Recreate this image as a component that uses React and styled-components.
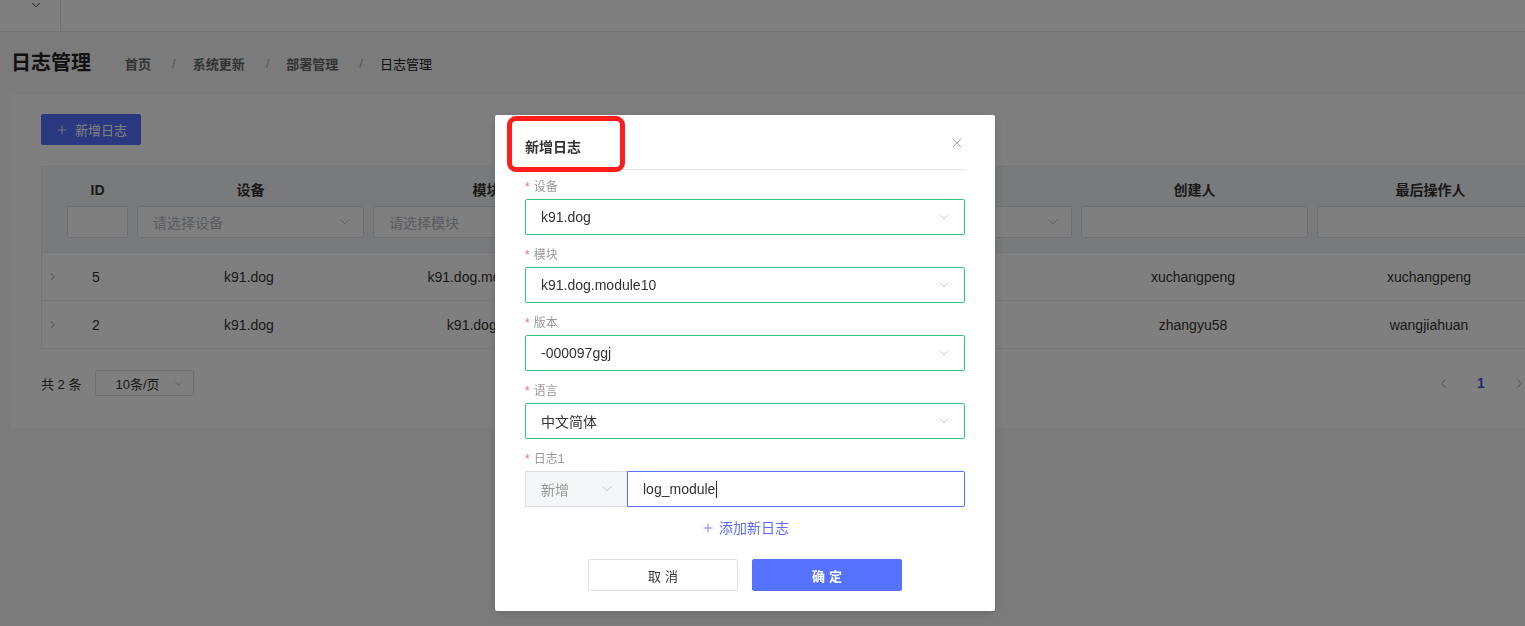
import React from "react";
import styled, { createGlobalStyle } from "styled-components";
import { ChevronDown, ChevronLeft, ChevronRight, Plus, X } from "lucide-react";

const GlobalStyle = createGlobalStyle`
  html, body {
    margin: 0;
    padding: 0;
    background: #f6f6f9;
    font-family: "Liberation Sans", "Noto Sans CJK SC", sans-serif;
    color: #333;
    overflow: hidden;
  }
  * { box-sizing: border-box; }
`;

const Page = styled.div`
  width: 1525px;
  height: 626px;
  overflow: hidden;
  background: #f6f6f9;
`;

const TopBar = styled.div`
  height: 32px;
  background: #fff;
  border-bottom: 1px solid #e6e6e6;
  display: flex;
`;

const Collapse = styled.div`
  width: 61px;
  border-right: 1px solid #e2e2e2;
  display: flex;
  justify-content: flex-end;
  padding-right: 17px;
  margin-top: -2px;
  color: #333;
`;

const TitleRow = styled.div`
  height: 62px;
  display: flex;
  align-items: center;
  padding: 0 0 0 11px;
`;

const PageTitle = styled.h1`
  margin: 0;
  font-size: 20px;
  line-height: 28px;
  font-weight: 700;
  color: #222;
`;

const Crumbs = styled.div`
  display: flex;
  align-items: center;
  margin-left: 34px;
  font-size: 13px;
`;

const Crumb = styled.span`
  color: ${(p) => (p.current ? "#222" : "#666")};
  font-weight: ${(p) => (p.current ? 400 : 700)};
`;

const Sep = styled.span`
  color: #aaa;
  margin: 0 17px 0 21px;
`;

const Card = styled.div`
  margin-top: 1px;
  margin-left: 11px;
  height: 333px;
  background: #fff;
  padding: 19px 0 0 30px;
`;

const PrimaryButton = styled.button`
  width: 100px;
  height: 31px;
  border: none;
  border-radius: 2px;
  background: #5470ff;
  color: #fff;
  font-family: inherit;
  font-size: 13px;
  display: flex;
  align-items: center;
  justify-content: center;
  gap: 6px;
  padding: 0;
`;

const cols = "19px 70px repeat(6, 236px)";

const Table = styled.div`
  margin-top: 21px;
  width: 1506px;
  border-left: 1px solid #e8eaee;
  border-top: 1px solid #e8eaee;
`;

const HeadRow = styled.div`
  display: grid;
  grid-template-columns: ${cols};
  background: #f3f4f6;
  height: 86px;
  border-bottom: 1px solid #e8eaee;
`;

const HeadCell = styled.div`
  display: flex;
  flex-direction: column;
  align-items: center;
  padding: 13px 3px 0 6px;
  gap: 6px;
`;

const HeadTitle = styled.div`
  font-size: 14px;
  font-weight: 700;
  line-height: 20px;
  color: #333;
  height: 20px;
`;

const FilterBox = styled.div`
  width: 100%;
  height: 32px;
  background: #fff;
  border: 1px solid #dcdfe6;
  border-radius: 2px;
  display: flex;
  align-items: center;
  justify-content: space-between;
  padding: 0 10px 0 15px;
  font-size: 14px;
  color: #b4b8c0;
`;

const Row = styled.div`
  display: grid;
  grid-template-columns: ${cols};
  height: 48px;
  border-bottom: 1px solid #e8eaee;
  align-items: center;
`;

const Cell = styled.div`
  text-align: center;
  font-size: 14px;
  color: #333;
  white-space: nowrap;
  overflow: hidden;
  display: flex;
  justify-content: center;
  align-items: center;
`;

const ExpandCell = styled(Cell)`
  justify-content: flex-start;
  padding-left: 4px;
  color: #888;
  overflow: visible;
`;

const Pager = styled.div`
  width: 1513px;
  margin-top: 21px;
  display: flex;
  align-items: center;
  justify-content: space-between;
  font-size: 13px;
`;

const PagerLeft = styled.div`
  display: flex;
  align-items: center;
  gap: 14px;
`;

const SizeSelect = styled.div`
  width: 99px;
  height: 26px;
  border: 1px solid #dcdfe6;
  border-radius: 2px;
  display: flex;
  align-items: center;
  justify-content: space-between;
  padding: 0 8px 0 19px;
  color: #333;
`;

const PagerRight = styled.div`
  display: flex;
  align-items: center;
  gap: 6px;
  margin-right: 19px;
`;

const PageBtn = styled.div`
  width: 32px;
  height: 26px;
  display: flex;
  align-items: center;
  justify-content: center;
  font-size: 14px;
  font-weight: ${(p) => (p.active ? 700 : 400)};
  color: ${(p) => (p.active ? "#3f56e0" : "#999")};
`;

const Mask = styled.div`
  position: fixed;
  inset: 0;
  background: rgba(0, 0, 0, 0.5);
`;

const Dialog = styled.div`
  position: fixed;
  left: 495px;
  top: 115px;
  width: 500px;
  background: #fff;
  border-radius: 2px;
  padding: 0 30px 20px;
  box-shadow: 0 2px 10px rgba(0, 0, 0, 0.15);
`;

const DialogHeader = styled.div`
  padding: 22px 0 12px;
  border-bottom: 1px solid #e4e6ea;
`;

const DialogTitle = styled.div`
  font-size: 14px;
  font-weight: 700;
  line-height: 20px;
  color: #333;
`;

const CloseBtn = styled.div`
  position: absolute;
  right: 30px;
  top: 20px;
  color: #999;
  display: flex;
`;

const Highlight = styled.div`
  position: absolute;
  left: 12px;
  top: 1px;
  width: 118px;
  height: 56px;
  border: 5px solid #ff1c1c;
  border-radius: 9px;
`;

const DialogBody = styled.div`
  padding-top: 8px;
`;

const FormItem = styled.div`
  margin-bottom: 11px;
`;

const Label = styled.div`
  font-size: 12px;
  line-height: 18px;
  padding-bottom: 3px;
  color: #999;
  &::before {
    content: "*";
    color: #f56c6c;
    margin-right: 4px;
  }
`;

const SelectBox = styled.div`
  height: 36px;
  border: 1px solid #33c47d;
  border-radius: 2px;
  display: flex;
  align-items: center;
  justify-content: space-between;
  padding: 0 12px 0 15px;
  font-size: 14px;
  color: #333;
`;

const ChevronMuted = styled.span`
  display: flex;
  color: #c0c4cc;
`;

const LogRow = styled.div`
  display: flex;
  height: 36px;
`;

const LogType = styled.div`
  width: 102px;
  background: #f5f6f9;
  border: 1px solid #dcdfe6;
  border-right: none;
  display: flex;
  align-items: center;
  justify-content: space-between;
  padding: 0 12px 0 15px;
  font-size: 14px;
  color: #999;
`;

const LogInput = styled.div`
  flex: 1;
  border: 1px solid #5673ff;
  border-radius: 0 2px 2px 0;
  display: flex;
  align-items: center;
  padding-left: 15px;
  font-size: 14px;
  color: #333;
`;

const Caret = styled.span`
  display: inline-block;
  width: 1px;
  height: 17px;
  background: #222;
  margin-left: 1px;
`;

const AddLink = styled.div`
  margin-top: 2px;
  display: flex;
  justify-content: center;
  align-items: center;
  gap: 4px;
  font-size: 14px;
  line-height: 20px;
  color: #5a6dff;
`;

const Footer = styled.div`
  margin-top: 21px;
  display: flex;
  justify-content: center;
  gap: 14px;
`;

const FooterButton = styled.button`
  width: 150px;
  height: 32px;
  border-radius: 2px;
  font-family: inherit;
  font-size: 13px;
  letter-spacing: 4px;
  padding: 0 0 0 4px;
  border: 1px solid ${(p) => (p.primary ? "#5673ff" : "#dcdfe6")};
  background: ${(p) => (p.primary ? "#5673ff" : "#fff")};
  color: ${(p) => (p.primary ? "#fff" : "#333")};
  font-weight: ${(p) => (p.primary ? 700 : 400)};
`;

const columns = ["ID", "设备", "模块", "版本", "语言", "创建人", "最后操作人"];

const filters = [
  { kind: "input" },
  { kind: "select", placeholder: "请选择设备" },
  { kind: "select", placeholder: "请选择模块" },
  { kind: "select", placeholder: "请选择版本" },
  { kind: "select", placeholder: "请选择语言" },
  { kind: "input" },
  { kind: "input" },
];

const rows = [
  ["5", "k91.dog", "k91.dog.module10", "-000097ggj", "中文简体", "xuchangpeng", "xuchangpeng"],
  ["2", "k91.dog", "k91.dog.test", "-000096ggj", "中文简体", "zhangyu58", "wangjiahuan"],
];

const formFields = [
  { label: "设备", value: "k91.dog" },
  { label: "模块", value: "k91.dog.module10" },
  { label: "版本", value: "-000097ggj" },
  { label: "语言", value: "中文简体" },
];

export default function App() {
  return (
    <>
      <GlobalStyle />
      <Page>
        <TopBar>
          <Collapse>
            <ChevronDown size={14} strokeWidth={1.6} />
          </Collapse>
        </TopBar>
        <TitleRow>
          <PageTitle>日志管理</PageTitle>
          <Crumbs>
            <Crumb>首页</Crumb>
            <Sep>/</Sep>
            <Crumb>系统更新</Crumb>
            <Sep>/</Sep>
            <Crumb>部署管理</Crumb>
            <Sep>/</Sep>
            <Crumb current>日志管理</Crumb>
          </Crumbs>
        </TitleRow>
        <Card>
          <PrimaryButton>
            <Plus size={14} strokeWidth={1.5} />
            新增日志
          </PrimaryButton>
          <Table>
            <HeadRow>
              <div />
              {columns.map((c, i) => (
                <HeadCell key={c}>
                  <HeadTitle>{c}</HeadTitle>
                  <FilterBox>
                    <span>{filters[i].placeholder || ""}</span>
                    {filters[i].kind === "select" && (
                      <ChevronDown size={16} strokeWidth={1.3} color="#b0b4bc" />
                    )}
                  </FilterBox>
                </HeadCell>
              ))}
            </HeadRow>
            {rows.map((r) => (
              <Row key={r[0]}>
                <ExpandCell>
                  <ChevronRight size={13} strokeWidth={1.5} />
                </ExpandCell>
                {r.map((v, i) => (
                  <Cell key={i}>{v}</Cell>
                ))}
              </Row>
            ))}
          </Table>
          <Pager>
            <PagerLeft>
              <span>共 2 条</span>
              <SizeSelect>
                <span>10条/页</span>
                <ChevronDown size={13} strokeWidth={1.3} color="#b0b4bc" />
              </SizeSelect>
            </PagerLeft>
            <PagerRight>
              <PageBtn>
                <ChevronLeft size={15} strokeWidth={1.5} />
              </PageBtn>
              <PageBtn active>1</PageBtn>
              <PageBtn>
                <ChevronRight size={15} strokeWidth={1.5} />
              </PageBtn>
            </PagerRight>
          </Pager>
        </Card>
      </Page>
      <Mask />
      <Dialog>
        <DialogHeader>
          <DialogTitle>新增日志</DialogTitle>
        </DialogHeader>
        <CloseBtn>
          <X size={16} strokeWidth={1.3} />
        </CloseBtn>
        <Highlight />
        <DialogBody>
          {formFields.map((f) => (
            <FormItem key={f.label}>
              <Label>{f.label}</Label>
              <SelectBox>
                <span>{f.value}</span>
                <ChevronMuted>
                  <ChevronDown size={16} strokeWidth={1.3} />
                </ChevronMuted>
              </SelectBox>
            </FormItem>
          ))}
          <FormItem>
            <Label>日志1</Label>
            <LogRow>
              <LogType>
                <span>新增</span>
                <ChevronMuted>
                  <ChevronDown size={16} strokeWidth={1.3} />
                </ChevronMuted>
              </LogType>
              <LogInput>
                log_module
                <Caret />
              </LogInput>
            </LogRow>
          </FormItem>
          <AddLink>
            <Plus size={14} strokeWidth={1.4} />
            添加新日志
          </AddLink>
          <Footer>
            <FooterButton>取消</FooterButton>
            <FooterButton primary>确定</FooterButton>
          </Footer>
        </DialogBody>
      </Dialog>
    </>
  );
}
